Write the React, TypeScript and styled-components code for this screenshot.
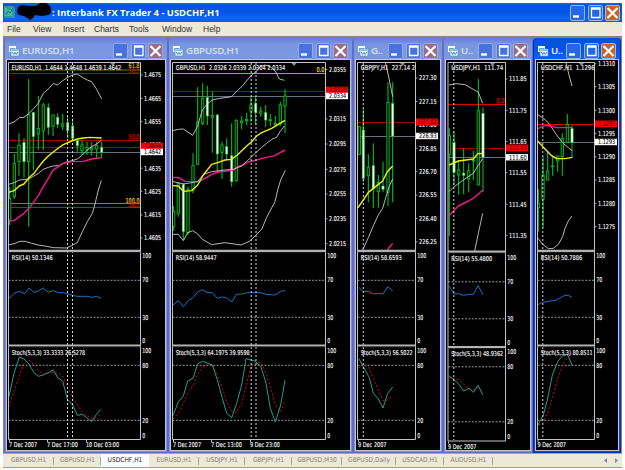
import React from 'react';
import styled, { createGlobalStyle } from 'styled-components';

const Global = createGlobalStyle`
  body { margin: 0; background: #fff; }
  * { box-sizing: border-box; }
`;

const UI_FONT = '"Open Sans", "Noto Sans", sans-serif';
const CHART_FONT = '"DejaVu Sans Condensed", "DejaVu Sans", sans-serif';

const Frame = styled.div`
  width: 625px;
  height: 470px;
  padding: 3px 3px 2px;
  display: flex;
  flex-direction: column;
  overflow: hidden;
  background: #fff;
`;

const AppTitle = styled.header`
  height: 19px;
  flex: none;
  display: flex;
  align-items: center;
  padding: 0 2px 0 1px;
  background: linear-gradient(#1a66e8 0, #0054dc 12%, #0458e4 55%, #0868fc 85%, #0058dc 100%);
`;

const Caption = styled.h1`
  margin: 0 auto 0 0;
  color: #fff;
  font: 700 9.4px/18px ${UI_FONT};
  white-space: nowrap;
`;

const MenuBar = styled.nav`
  height: 14px;
  flex: none;
  display: flex;
  padding-left: 4px;
  background: #ece9d8;
`;

const MenuItem = styled.span<{ $w: number }>`
  width: ${(p) => p.$w}px;
  font: 8.5px/15px "Liberation Sans", Arial, sans-serif;
  color: #33312f;
  white-space: nowrap;
`;

const Workspace = styled.main`
  height: 417px;
  flex: none;
  display: flex;
  padding: 2px 0 0 1px;
  background: #8a8474;
`;

const Child = styled.section<{ $w: number; $active?: boolean }>`
  width: ${(p) => p.$w}px;
  height: 415px;
  flex: none;
  display: flex;
  flex-direction: column;
  padding: 0 2px 2px;
  border: solid ${(p) => (p.$active ? '#0030b8' : '#5f6cc8')};
  border-width: 0 1px 1px;
  border-radius: 4px 4px 0 0;
  background: ${(p) => (p.$active ? '#0848dc' : '#7b8ee4')};
`;

const ChildTitle = styled.header<{ $active?: boolean }>`
  height: 22px;
  flex: none;
  display: flex;
  align-items: center;
  margin: 0 -2px;
  padding: 3px 4px 0 3px;
  border-radius: 4px 4px 0 0;
  background: ${(p) =>
    p.$active
      ? 'linear-gradient(#0a50d8, #0054e0 50%, #0860f4 90%, #0048cc)'
      : 'linear-gradient(#6480d8, #7a96e0 30%, #7c98e2 90%, #7088d4)'};
`;

const ChildName = styled.h2<{ $active?: boolean }>`
  margin: 0 auto 0 2px;
  font: 600 9.7px/16px ${UI_FONT};
  letter-spacing: -0.15px;
  color: ${(p) => (p.$active ? '#fff' : '#d6e2fa')};
  white-space: nowrap;
`;

const ChartBody = styled.div`
  height: 390px;
  flex: none;
  background: #000;
  box-shadow: 0 0 0 1px #c4c4cc;
  svg { display: block; }
`;

const TabBar = styled.footer`
  height: 14px;
  flex: none;
  display: flex;
  align-items: stretch;
  background: #ece9d8;
  border-top: 1px solid #aaa590;
`;

const Tab = styled.span<{ $w: number; $active?: boolean }>`
  width: ${(p) => p.$w}px;
  font: 6.6px/12px ${CHART_FONT};
  text-align: center;
  white-space: nowrap;
  color: ${(p) => (p.$active ? '#222' : '#848070')};
  background: ${(p) => (p.$active ? '#fff' : 'linear-gradient(#a8a494, #a8a494) right center / 1px 8px no-repeat')};
`;

const TabArrows = styled.span`
  margin-left: auto;
  padding: 4px 3px 0 0;
  line-height: 0;
`;

const StatusEdge = styled.div`
  height: 1px;
  flex: none;
  background: #6aaae8;
`;

type ButtonKind = 'min' | 'max' | 'close';

const ButtonSvg = styled.svg`
  flex: none;
  display: block;
`;

function WindowButton({ kind, active }: { kind: ButtonKind; active?: boolean }) {
  const blue = active ? '#2468e8' : '#4a72dc';
  const fill = kind === 'close' ? (active ? '#c86428' : '#9c6c84') : blue;
  return (
    <ButtonSvg width="15" height="16" viewBox="0 0 15 16">
      <rect x=".5" y=".5" width="14" height="15" rx="1.5" fill={fill} stroke={active ? '#b4ccf8' : '#a0b4f0'} strokeWidth=".8" />
      {kind === 'min' && <path d="M3 11.5h6" stroke="#fff" strokeWidth="2.4" />}
      {kind === 'max' && <path d="M3.5 3h8.5v9.5H3.5zM3 4h9.5" fill="none" stroke="#fff" strokeWidth="1.3" />}
      {kind === 'close' && <path d="M2.5 3l10 10M12.5 3l-10 10" stroke="#fff" strokeWidth="2.2" />}
    </ButtonSvg>
  );
}

const Buttons = styled.div`
  display: flex;
  gap: 2.5px;
`;

function WindowButtons({ active }: { active?: boolean }) {
  return (
    <Buttons>
      <WindowButton kind="min" active={active} />
      <WindowButton kind="max" active={active} />
      <WindowButton kind="close" active={active} />
    </Buttons>
  );
}

function ChartIcon() {
  return (
    <ButtonSvg width="12" height="12" viewBox="0 0 12 12">
      <path d="M1 1h7v6H1z" fill="#fff" />
      <path d="M2 3h5v3H2z" fill="#6fb0d8" />
      <path d="M3 4h8v7H3z" fill="#eefaff" stroke="#5c8cc0" strokeWidth=".7" />
      <path d="M4 5.2h6" stroke="#58a0c0" />
      <path d="M4.2 7l1.5 2.5L7 7.3l1.2 2.2L10 7" fill="none" stroke="#3080a8" strokeWidth=".9" />
    </ButtonSvg>
  );
}

function AppIcon() {
  return (
    <ButtonSvg width="48" height="19" viewBox="0 0 48 19">
      <path d="M0 3h9l2 2v10H1l-1-2z" fill="#2c9c94" />
      <path d="M1 5h7v8H1z" fill="#48b4a4" />
      <path d="M2 12l2-4 2 2 3-5M3 6h4" stroke="#167880" fill="none" />
      <path d="M14 4l4-2 6 1h8l4-3 6 0 3 2 2 3v5l-3 2-6 1-7-1-2 3-3 2-3-2-3-2-5-1-2-3z" fill="#000" />
    </ButtonSvg>
  );
}

const WHITE = '#d2d2d2';
const YELLOW = '#f4f000';
const PINK = '#f01890';
const RED = '#e00000';
const DARK_RED = '#a80000';
const SLATE = '#66707e';

/* A series is drawn in thirds of a pixel, from its own origin. */
type Origin = [number, number];
type Line = [color: string, points: string, width?: number];
/* x, high, low, body top, body bottom, 1 when the body is filled */
type Candle = [number, number, number, number, number, number];
type Label = [text: string, y: number];

interface Chart {
  name: string;
  width: number;
  active?: boolean;
  left: number;
  plotLeft: number;
  plotRight: number;
  shift: number;
  header: [string, number];
  rsi: [string, number];
  stoch: [string, number];
  marker: number;
  prices: Label[];
  ask: Label;
  bid: Label;
  priceWidth: number;
  levels: [string, number][];
  fib: [string, number, string][];
  days: number[];
  dates: [string, number, number][];
  priceOrigin: Origin[];
  curves: [number, Line][];
  candles: Candle[];
  candleOrigin: Origin;
  lowerOrigin: Origin;
  rsiLine: string;
  main: string;
  signal: string;
}

const charts: Chart[] = [
  {
    name: 'EURUSD,H1', width: 164, left: 7, plotLeft: 8.5, plotRight: 140.5, shift: 0,
    header: ['EURUSD,H1  1.4644 1.4648 1.4639 1.4642', 109.5],
    rsi: ['RSI(14) 50.1346', 41], stoch: ['Stoch(5,3,3) 33.3333 26.5278', 73.5], marker: 113,
    prices: [['1.4675', 75], ['1.4665', 98.3], ['1.4655', 121.7], ['1.4645', 144.3], ['1.4635', 168.2], ['1.4625', 191.3], ['1.4615', 215], ['1.4605', 238]],
    ask: ['1.4644', 146], bid: ['1.4642', 152], priceWidth: 17,
    levels: [['#807000', 70], [DARK_RED, 73.5], [DARK_RED, 140.5], [DARK_RED, 147.5], [SLATE, 152.5], ['#988000', 203.5], [RED, 207.5]],
    fib: [['61.8', 66, '#e0c000'], ['38.2', 70.5, '#a82000'], ['50.0', 137, RED], ['100.0', 200.5, '#f0d800'], ['38.2', 205, RED]],
    days: [67.5, 72.5],
    dates: [['7 Dec 2007', 9, 28], ['7 Dec 17:00', 47, 31], ['10 Dec 03:00', 86, 33]],
    priceOrigin: [[0, 0], [0, 390]],
    curves: [
      [0, [WHITE, '26,372 42,366 58,353 72,352 87,340 102,325 115,310 130,280 147,265 160,250 172,255 188,242 202,233 217,225 232,222 248,233 262,240 275,245 290,268 305,297']],
      [1, [WHITE, '26,163 42,158 58,150 87,147 115,130 130,118 145,112 160,108 175,107 202,95 217,92 232,87 247,75 262,60 275,50 290,42 305,30']],
      [1, [WHITE, '26,345 45,340 60,334 75,334 95,340 115,345 140,349 160,353 200,354 215,347 232,338 247,305 262,275 277,250 285,222 295,180 304,151']],
      [1, [PINK, '26,273 42,272 58,260 72,250 87,235 102,215 115,197 130,170 145,145 158,122 175,110 190,100 217,95 250,94 275,87 304,83', 4.2]],
      [1, [YELLOW, '26,187 42,182 58,168 72,162 87,143 102,130 115,112 130,93 145,78 160,66 175,54 190,44 215,33 232,27 250,24 270,22 305,24', 4.2]],
    ],
    candleOrigin: [0, 0],
    candles: [
      [29, 560, 675, 595, 660, 0], [43, 462, 597, 490, 590, 0], [57, 400, 527, 436, 485, 0], [72, 415, 533, 427, 485, 1],
      [86, 237, 680, 343, 485, 0], [100, 335, 510, 337, 410, 1], [115, 288, 450, 385, 402, 0], [130, 308, 450, 315, 393, 0],
      [145, 310, 405, 323, 382, 1], [159, 345, 408, 345, 378, 0], [173, 340, 385, 352, 373, 1], [188, 342, 390, 372, 379, 0],
      [203, 352, 415, 367, 392, 1], [218, 355, 422, 378, 415, 1], [232, 417, 455, 422, 437, 1], [246, 420, 465, 435, 452, 0],
      [261, 425, 465, 443, 448, 0], [275, 425, 467, 445, 450, 0], [290, 425, 475, 437, 447, 0], [305, 425, 475, 442, 457, 1],
    ],
    lowerOrigin: [0, 750],
    rsiLine: '26,147 42,130 58,124 74,131 87,114 102,127 115,123 130,114 145,127 160,122 175,128 190,128 217,136 232,139 260,139 275,142 290,139 303,145',
    main: '26,443 42,370 58,321 72,327 87,342 102,368 115,379 130,375 145,368 160,360 173,383 188,393 202,448 218,465 232,496 247,493 260,503 275,515 290,492 303,478',
    signal: '26,470 42,425 58,378 72,340 87,330 102,345 115,362 130,372 160,367 175,370 190,382 202,410 218,440 232,465 247,485 260,497 280,507 300,495',
  },
  {
    name: 'GBPUSD,H1', width: 185, left: 171, plotLeft: 172.5, plotRight: 325.5, shift: 0,
    header: ['GBPUSD,H1  2.0326 2.0339 2.0304 2.0334', 109.5],
    rsi: ['RSI(14) 58.9447', 41], stoch: ['Stoch(5,3,3) 64.1975 39.9598', 74], marker: 294,
    prices: [['2.0355', 69.5], ['2.0335', 94], ['2.0315', 119], ['2.0295', 144], ['2.0275', 169.3], ['2.0255', 194], ['2.0235', 218.8], ['2.0215', 243.7]],
    ask: ['2.0338', 90], bid: ['2.0334', 96], priceWidth: 17,
    levels: [['#b0a800', 73.5], [DARK_RED, 91.5], [SLATE, 96.5]],
    fib: [['0.0', 70, '#e8e000']],
    days: [251.2, 256],
    dates: [['7 Dec 2007', 173, 28], ['7 Dec 13:00', 211, 31], ['9 Dec 23:00', 250, 30]],
    priceOrigin: [[480, 0], [495, 390]],
    curves: [
      [0, [WHITE, '38,392 55,388 70,387 98,406 112,380 127,330 142,312 157,300 175,296 215,290 232,272 247,258 262,240 275,225 288,215 300,200 315,195 330,200 345,212 358,237 373,241']],
      [1, [PINK, '24,142 40,142 60,154 98,155 115,148 140,133 160,126 180,124 205,120 215,111 235,105 250,96 275,90 300,83 330,77 345,68 361,60', 4.2]],
      [1, [WHITE, '24,155 40,158 55,162 80,158 98,155 115,133 140,125 180,120 205,118 230,108 250,90 268,72 290,52 305,40 320,28 335,22 345,5 358,-12']],
      [1, [WHITE, '24,313 40,313 55,332 68,308 83,302 98,312 112,328 140,344 180,338 228,345 255,333 270,318 290,298 305,262 330,215 338,180 347,150 361,121']],
      [1, [YELLOW, '24,167 40,168 55,184 80,182 98,165 115,135 140,103 160,97 180,90 200,88 217,75 245,48 260,35 275,18 290,8 320,-5 340,-17 360,-29', 4.2]],
    ],
    candleOrigin: [495, 390],
    candles: [
      [26, 228, 303, 244, 290, 0], [40, 158, 260, 160, 250, 0], [55, 160, 330, 163, 305, 1], [69, 170, 315, 178, 308, 0],
      [84, 70, 190, 107, 180, 0], [98, -128, 105, -23, 103, 0], [113, -140, -15, -95, -20, 0], [127, -133, -15, -98, -42, 1],
      [142, -115, 68, -43, -38, 0], [157, -48, 125, -45, 72, 1], [171, 35, 147, 45, 67, 0], [185, 25, 90, 50, 72, 1],
      [200, -20, 170, 77, 155, 1], [214, -32, 155, -28, 152, 0], [230, -42, -2, -27, -22, 0], [245, -52, -15, -32, -28, 0],
      [258, -100, -25, -75, -57, 0], [272, -100, -15, -80, -52, 1], [287, -70, -40, -57, -50, 0], [302, -75, -10, -52, -30, 1],
      [316, -48, -12, -31, -28, 0], [331, -42, -12, -20, -16, 0], [346, -85, -12, -75, -20, 0], [360, -122, 8, -102, -72, 0],
    ],
    lowerOrigin: [495, 750],
    rsiLine: '24,165 40,152 55,170 70,152 85,142 97,127 112,119 127,128 142,128 157,145 172,141 185,144 201,156 214,133 230,132 245,128 287,128 303,133 330,135 347,124 360,121',
    main: '24,497 40,455 55,438 68,393 84,385 98,342 112,334 125,338 142,345 157,390 172,445 185,490 200,503 215,460 230,405 243,326 270,333 288,350 303,400 316,475 331,516 347,465 360,390',
    signal: '24,507 40,490 55,460 70,427 85,405 97,375 112,353 125,342 142,345 157,375 172,415 187,460 200,483 215,488 230,460 243,410 258,350 272,335 290,340 303,370 316,410 330,462 345,485 360,455',
  },
  {
    name: 'G..', width: 90, left: 356, plotLeft: 357.5, plotRight: 415.5, shift: 0,
    header: ['GBPJPY,H1  227.14 2', 54.5], rsi: ['RSI(14) 58.6593', 41], stoch: ['Stoch(5,3,3) 56.5022', 52], marker: 402.5,
    prices: [['227.30', 78], ['227.15', 101.5], ['227.00', 125], ['226.85', 148.3], ['226.70', 171.7], ['226.55', 195], ['226.40', 218.5], ['226.25', 242]],
    ask: ['227.02', 121.8], bid: ['226.93', 136], priceWidth: 17.5,
    levels: [[DARK_RED, 122.5], [SLATE, 136.5]], fib: [], days: [363.3],
    dates: [['9 Dec 2007', 358, 28.5]],
    priceOrigin: [[1050, 180]],
    curves: [
      [0, [WHITE, '106,8 115,45 128,110']],
      [0, [WHITE, '38,570 55,533 70,497 85,465 98,445 108,410 118,378 128,357']],
      [0, [PINK, '112,570 128,550', 4.2]],
      [0, [YELLOW, '24,443 40,420 55,397 70,385 85,373 98,363 112,335 128,318', 4.2]],
    ],
    candleOrigin: [1050, 180],
    candles: [[28, 198, 285, 200, 283, 0], [40, 148, 365, 210, 355, 1], [55, 283, 427, 322, 347, 0], [70, 250, 445, 317, 387, 1], [85, 345, 443, 367, 395, 0], [99, 305, 397, 378, 388, 1], [114, 67, 438, 127, 397, 0], [128, 67, 427, 130, 228, 1]],
    lowerOrigin: [1050, 750],
    rsiLine: '26,112 40,125 55,124 70,132 85,130 99,132 113,110 128,122',
    main: '26,325 40,350 58,383 70,430 85,447 99,474 113,430 128,411',
    signal: '26,355 40,343 55,350 70,385 85,420 99,452 113,450 128,438',
  },
  {
    name: 'U..', width: 90, left: 446, plotLeft: 448, plotRight: 505.5, shift: 1.5,
    header: ['USDJPY,H1  111.74', 52], rsi: ['RSI(14) 55.4800', 41], stoch: ['Stoch(5,3,3) 48.9362', 52], marker: 492.5,
    prices: [['111.85', 79], ['111.75', 110.3], ['111.65', 141.7], ['111.55', 172.8], ['111.45', 204.2], ['111.35', 235.4]],
    ask: ['111.63', 147.8], bid: ['111.60', 157.3], priceWidth: 17.5,
    levels: [[RED, 104.5], [DARK_RED, 148.5], [SLATE, 157.5]], fib: [['0.0', 101, RED]], days: [453.8],
    dates: [['9 Dec 2007', 448, 28.5]],
    priceOrigin: [[1050, 180]],
    curves: [
      [0, [WHITE, '297,75 320,71 345,74 370,88 385,97 398,130']],
      [0, [WHITE, '297,395 310,382 340,360 370,340 384,317 398,296']],
      [0, [WHITE, '374,573 385,520 398,460']],
      [0, [PINK, '297,467 325,438 355,423 370,415 385,402 400,389', 4.2]],
      [0, [YELLOW, '297,315 325,303 370,297 384,280 400,281', 4.2]],
    ],
    candleOrigin: [1050, 180],
    candles: [[298, 205, 527, 227, 283, 0], [312, 215, 375, 247, 337, 1], [326, 300, 405, 330, 345, 0], [341, 265, 403, 339, 346, 1], [356, 310, 397, 332, 357, 0], [370, 272, 360, 300, 303, 0], [385, 57, 375, 152, 375, 0], [399, 142, 395, 160, 292, 1]],
    lowerOrigin: [1050, 750],
    rsiLine: '297,108 312,132 325,131 341,136 355,133 370,133 384,107 399,134',
    main: '297,377 312,390 325,400 341,423 357,415 370,427 384,406 399,435',
    signal: '297,383 312,386 325,388 341,402 357,415 370,420 384,413 399,423',
  },
  {
    name: 'U..', width: 88, active: true, left: 536, plotLeft: 537.5, plotRight: 594.5, shift: 0,
    header: ['USDCHF,H1  1.1296', 54], rsi: ['RSI(14) 50.7886', 41.5], stoch: ['Stoch(5,3,3) 80.8511', 52], marker: 581.5,
    prices: [['1.1310', 63.8], ['1.1305', 86.7], ['1.1300', 110.3], ['1.1295', 133.3], ['1.1290', 156.8], ['1.1285', 180], ['1.1280', 203.4], ['1.1275', 226.6]],
    ask: ['1.1297', 123.8], bid: ['1.1293', 142], priceWidth: 17,
    levels: [[RED, 124.5], [SLATE, 142.5]], fib: [], days: [542.8],
    dates: [['9 Dec 2007', 537.5, 28.5]],
    priceOrigin: [[1455, 180]],
    curves: [
      [0, [WHITE, '243,8 252,45 261,78']],
      [0, [WHITE, '157,163 180,178 195,195 215,225 235,250 250,263 261,272']],
      [0, [WHITE, '157,532 172,552 190,566 205,565 220,553 233,530 240,505 250,483 261,468']],
      [0, [PINK, '157,207 172,199 185,196 215,203 262,203', 4.2]],
      [0, [YELLOW, '157,242 175,262 200,287 215,296 240,296 262,292', 4.2]],
    ],
    candleOrigin: [1455, 180],
    candles: [[160, 387, 515, 430, 443, 0], [174, 290, 503, 345, 417, 0], [188, 275, 360, 333, 360, 0], [203, 290, 347, 318, 320, 0], [218, 288, 335, 288, 303, 0], [232, 220, 347, 235, 290, 0], [247, 162, 248, 193, 247, 0], [261, 195, 292, 205, 248, 1]],
    lowerOrigin: [1455, 750],
    rsiLine: '159,164 172,157 190,154 210,151 225,144 240,136 250,136 261,142',
    main: '159,525 175,495 187,450 202,375 218,335 233,317 247,313 261,345',
    signal: '160,525 172,520 188,490 203,440 218,385 233,345 247,322 261,312',
  },
];

const thirds = ([x, y]: Origin) => `scale(${1 / 3}) translate(${x} ${y})`;

function Text({ x, y, w, fill = '#f0f0f0', children }: { x: number; y: number; w?: number; fill?: string; children: string }) {
  return (
    <text x={x} y={y + 2.4} fill={fill} fontSize="6.6" fontFamily={CHART_FONT} textLength={w} lengthAdjust="spacingAndGlyphs" xmlSpace="preserve" stroke={fill} strokeWidth=".15">
      {children}
    </text>
  );
}

function ChartPlot({ c }: { c: Chart }) {
  const inner = c.width - 6;
  const { plotLeft: l, plotRight: r, shift: s } = c;
  const scaleX = r + 1.8;
  const textX = l + 3.2;
  const priceX = r + 3.6;
  const clip = `clip-${c.left}`;
  const lower: [string, number, number][] = [['100', 256, 9], ['70', 280, 6], ['30', 317.2, 6], ['0', 340.7, 3], ['100', 350.5, 9], ['80', 365.3, 6], ['20', 420.3, 6], ['0', 435.2, 3]];
  return (
    <svg width={inner} height="390" viewBox={`${c.left} 60 ${inner} 390`}>
      <clipPath id={clip}>
        <rect x={l} y="62" width={r - l} height="378" />
      </clipPath>
      <g clipPath={`url(#${clip})`}>
        {c.levels.map(([color, y], i) => <path key={i} d={`M${l} ${y}H${r}`} stroke={color} />)}
        <g transform={thirds(c.candleOrigin)}>
          {c.candles.map(([x, hi, lo, top, bottom, filled], i) => (
            <g key={i} stroke="#00c41c">
              <path d={`M${x} ${hi}V${lo}`} strokeWidth="3.2" />
              <rect x={x - 3.5} y={top} width="7" height={bottom - top} fill={filled ? '#fff' : '#001800'} strokeWidth={filled ? 1.8 : 2.6} />
            </g>
          ))}
        </g>
        {c.curves.map(([o, [color, points, width]], i) => (
          <polyline key={i} transform={thirds(c.priceOrigin[o])} points={points} fill="none" stroke={color} strokeWidth={width ?? 2.6} strokeLinejoin="round" />
        ))}
        {[280.3, 317.3, 365.3, 420.3].map((y) => (
          <path key={y} d={`M${l} ${y + s}H${r}`} stroke="#a8a8a8" strokeWidth=".9" strokeDasharray="2 1.4" />
        ))}
        <g transform={thirds(c.lowerOrigin)} fill="none" strokeWidth="3">
          <polyline points={c.rsiLine} stroke="#1c70c4" />
          <polyline points={c.signal} stroke="#d80808" strokeDasharray="6 6" />
          <polyline points={c.main} stroke="#209c90" />
        </g>
        {c.days.map((x) => <path key={x} d={`M${x} 63V440`} stroke="#d8d8d8" strokeDasharray="2 2" />)}
        <Text x={textX} y={67.2} w={c.header[1]}>{c.header[0]}</Text>
        {c.fib.map(([t, y, color], i) => (
          <Text key={i} x={r - (t.length > 4 ? 15 : t.length > 3 ? 12 : 9)} y={y} w={t.length > 4 ? 14 : t.length > 3 ? 11 : 8} fill={color}>{t}</Text>
        ))}
      </g>
      <path d={`M${c.marker - 2.5} 63h5l-2.5 3z`} fill="#8090a8" />
      <path d={`M${l} 62.5H${r}V${439.5 + s}H${l}Z`} fill="none" stroke="#c4c4c4" />
      <path d={`M${l} ${250.8 + s / 2}H${r}M${l} ${345.5 + s}H${r}`} stroke="#b4b4b4" strokeWidth="2.2" />
      <path d={`M${l} ${252.4 + s / 2}H${r}M${l} ${347 + s}H${r}`} stroke="#303030" strokeWidth=".6" />
      <Text x={textX} y={257.6 + s / 2} w={c.rsi[1]}>{c.rsi[0]}</Text>
      <Text x={textX} y={352.2 + s} w={c.stoch[1]}>{c.stoch[0]}</Text>
      {c.prices.map(([t, y]) => (
        <g key={t}>
          <path d={`M${r} ${y}h2`} stroke="#c4c4c4" strokeWidth=".8" />
          <Text x={priceX} y={y} w={c.priceWidth}>{t}</Text>
        </g>
      ))}
      <rect x={r + 0.5} y={c.ask[1] - 3.3} width="22" height="6.8" fill="#f80000" />
      <Text x={priceX} y={c.ask[1]} w={c.priceWidth} fill="#600000">{c.ask[0]}</Text>
      <rect x={r + 0.5} y={c.bid[1] - 3.2} width="22" height="6.4" fill="#fff" />
      <Text x={priceX} y={c.bid[1]} w={c.priceWidth} fill="#202020">{c.bid[0]}</Text>
      {lower.map(([t, y, w], i) => <Text key={i} x={scaleX} y={y + s} w={w}>{t}</Text>)}
      {c.dates.map(([t, x, w]) => (
        <g key={t}>
          <path d={`M${x + 0.5} ${440 + s}v2`} stroke="#c4c4c4" />
          <Text x={x} y={445 + s} w={w}>{t}</Text>
        </g>
      ))}
    </svg>
  );
}

function ChartWindow({ chart }: { chart: Chart }) {
  return (
    <Child $w={chart.width} $active={chart.active}>
      <ChildTitle $active={chart.active}>
        <ChartIcon />
        <ChildName $active={chart.active}>{chart.name}</ChildName>
        <WindowButtons active={chart.active} />
      </ChildTitle>
      <ChartBody>
        <ChartPlot c={chart} />
      </ChartBody>
    </Child>
  );
}

const menus: [string, number][] = [['File', 26], ['View', 30], ['Insert', 31], ['Charts', 35], ['Tools', 33], ['Window', 41], ['Help', 30]];

const tabs: [string, number][] = [
  ['GBPUSD,H1', 51], ['GBPUSD,H1', 47], ['USDCHF,H1', 48], ['EURUSD,H1', 50], ['USDJPY,H1', 46], ['GBPJPY,H1', 47],
  ['GBPUSD,M30', 50], ['GBPUSD,Daily', 54], ['USDCAD,H1', 48], ['AUDUSD,H1', 49],
];

export default function App() {
  return (
    <Frame>
      <Global />
      <AppTitle>
        <AppIcon />
        <Caption>: Interbank FX Trader 4 - USDCHF,H1</Caption>
        <WindowButtons active />
      </AppTitle>
      <MenuBar>
        {menus.map(([label, w]) => <MenuItem key={label} $w={w}>{label}</MenuItem>)}
      </MenuBar>
      <Workspace>
        {charts.map((chart) => <ChartWindow key={chart.left} chart={chart} />)}
      </Workspace>
      <TabBar>
        {tabs.map(([label, w], i) => <Tab key={i} $w={w} $active={i === 2}>{label}</Tab>)}
        <TabArrows>
          <svg width="16" height="5" viewBox="0 0 16 5">
            <path d="M4 0v5L1 2.5zM12 0v5l3-2.5z" fill="#7888a8" />
          </svg>
        </TabArrows>
      </TabBar>
      <StatusEdge />
    </Frame>
  );
}
